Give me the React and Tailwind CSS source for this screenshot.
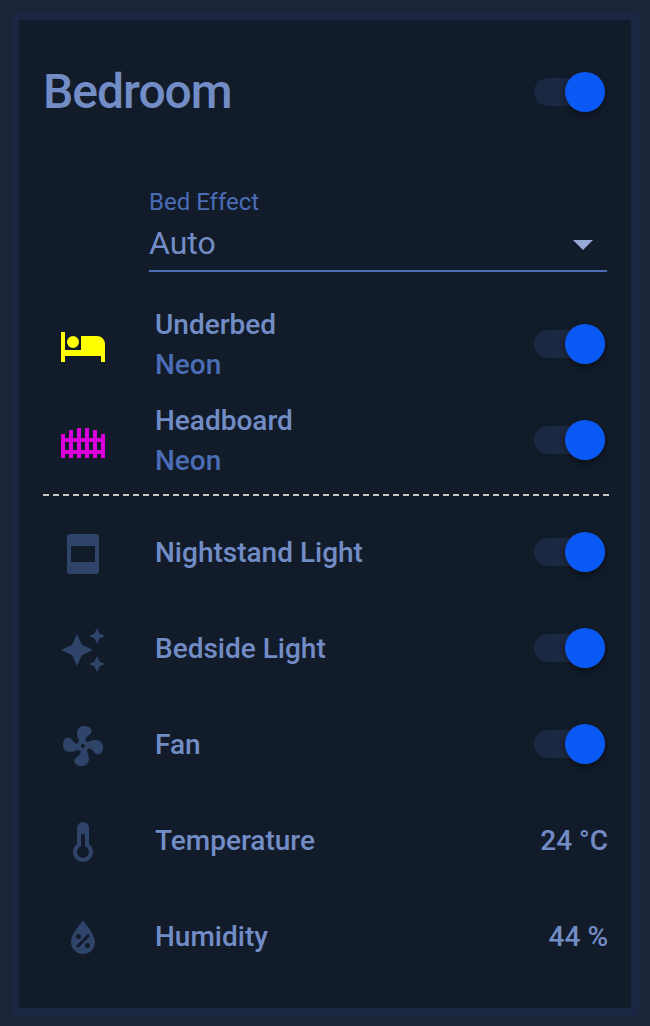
const ICONS = {
  bed: 'M19,7H11V14H3V5H1V20H3V17H21V20H23V11A4,4 0 0,0 19,7M7,13A3,3 0 0,0 10,10A3,3 0 0,0 7,7A3,3 0 0,0 4,10A3,3 0 0,0 7,13Z',
  fence:
    'M1,8H3V10H5V6H7V10H9V5H11V10H13V5H15V10H17V6H19V10H21V8H23V20H21V18H19V20H17V18H15V20H13V18H11V20H9V18H7V20H5V18H3V20H1ZM3,12V16H5V12ZM7,12V16H9V12ZM11,12V16H13V12ZM15,12V16H17V12ZM19,12V16H21V12Z',
  nightstand:
    'M5.5,2H18.5A1.5,1.5 0 0,1 20,3.5V20.5A1.5,1.5 0 0,1 18.5,22H5.5A1.5,1.5 0 0,1 4,20.5V3.5A1.5,1.5 0 0,1 5.5,2ZM6,8V16H18V8Z',
  sparkles:
    'M19,1L17.74,3.75L15,5L17.74,6.26L19,9L20.25,6.26L23,5L20.25,3.75M9,4L6.5,9.5L1,12L6.5,14.5L9,20L11.5,14.5L17,12L11.5,9.5M19,15L17.74,17.74L15,19L17.74,20.25L19,23L20.25,20.25L23,19L20.25,17.74',
  fan: 'M12,11A1,1 0 0,0 11,12A1,1 0 0,0 12,13A1,1 0 0,0 13,12A1,1 0 0,0 12,11M12.5,2C17,2 17.11,5.57 14.75,6.75C13.76,7.24 13.32,8.29 13.13,9.22C13.61,9.42 14.03,9.73 14.35,10.13C18.05,8.13 22.03,8.92 22.03,12.5C22.03,17 18.46,17.1 17.28,14.73C16.78,13.74 15.72,13.3 14.79,13.11C14.59,13.59 14.28,14 13.88,14.34C15.87,18.03 15.08,22 11.5,22C7,22 6.91,18.42 9.27,17.24C10.25,16.75 10.69,15.71 10.89,14.79C10.4,14.59 9.97,14.27 9.65,13.87C5.96,15.85 2,15.07 2,11.5C2,7 5.56,6.89 6.74,9.26C7.24,10.25 8.29,10.68 9.22,10.87C9.41,10.39 9.73,9.97 10.14,9.65C8.15,5.96 8.94,2 12.5,2Z',
  thermometer:
    'M17,17A5,5 0 0,1 12,22A5,5 0 0,1 7,17C7,15.36 7.79,13.91 9,13V5A3,3 0 0,1 12,2A3,3 0 0,1 15,5V13C16.21,13.91 17,15.36 17,17M11,8V14.17C9.83,14.58 9,15.69 9,17A3,3 0 0,0 12,20A3,3 0 0,0 15,17C15,15.69 14.17,14.58 13,14.17V8H11Z',
  humidity:
    'M12,3.25C12,3.25 6,10 6,14C6,17.32 8.69,20 12,20A6,6 0 0,0 18,14C18,10 12,3.25 12,3.25M14.47,9.97L15.53,11.03L9.53,17.03L8.47,15.97M9.75,10A1.25,1.25 0 0,1 11,11.25A1.25,1.25 0 0,1 9.75,12.5A1.25,1.25 0 0,1 8.5,11.25A1.25,1.25 0 0,1 9.75,10M14.25,14.5A1.25,1.25 0 0,1 15.5,15.75A1.25,1.25 0 0,1 14.25,17A1.25,1.25 0 0,1 13,15.75A1.25,1.25 0 0,1 14.25,14.5Z',
};

function Icon({ name, color = 'text-[#2f4469]' }) {
  return (
    <svg viewBox="0 0 24 24" className={`mt-1 size-12 shrink-0 ${color}`}>
      <path d={ICONS[name]} fill="currentColor" fillRule="evenodd" />
    </svg>
  );
}

function Toggle() {
  return (
    <button
      type="button"
      role="switch"
      aria-checked="true"
      className="mr-0.5 flex h-10 w-[71px] shrink-0 items-center"
    >
      <span className="h-7 w-16 rounded-full bg-[#1b2841]" />
      <span className="-ml-[33px] size-10 shrink-0 rounded-full bg-[#0b59f4] shadow-[0_3px_6px_rgba(0,0,0,0.4)]" />
    </button>
  );
}

function Row({ icon, color, name, secondary, value }) {
  return (
    <div className="flex h-20 items-center pl-4">
      <Icon name={icon} color={color} />
      <div className="ml-12 flex-1 pt-0.5 text-[28px] leading-10 font-medium">
        <div>{name}</div>
        {secondary && <div className="text-[#4a6db5]">{secondary}</div>}
      </div>
      {value ? (
        <div className="-mr-px pt-0.5 text-[28px] leading-10 font-medium">{value}</div>
      ) : (
        <Toggle />
      )}
    </div>
  );
}

export default function App() {
  return (
    <div className="h-[1026px] w-[650px] bg-[#1a2538] pt-3 pl-[11px] font-[Roboto,sans-serif] text-[#728dc6]">
      <main className="flex h-[1004px] w-[628px] flex-col rounded-md bg-[#1b2742] p-2">
        <div className="flex-1 bg-[#121b2a] pr-6 pl-6">
          <header className="flex h-36 items-center justify-between">
            <h1 className="text-[48px] leading-[56px] font-medium tracking-[-0.021em]">Bedroom</h1>
            <Toggle />
          </header>

          <div className="mt-1 ml-[106px] h-[104px] border-b-2 border-[#4a6db5] pt-5">
            <div className="text-2xl leading-7 text-[#4a6db5]">Bed Effect</div>
            <div className="mt-[3px] flex items-center justify-between pr-3.5 text-[32px] leading-[48px]">
              <span>Auto</span>
              <svg viewBox="0 0 20 10" className="mt-1 h-2.5 w-5 text-[#98a9d8]">
                <path d="M0 0H20L10 10Z" fill="currentColor" />
              </svg>
            </div>
          </div>

          <section className="mt-8 flex flex-col gap-4">
            <Row icon="bed" color="text-[#ffff00]" name="Underbed" secondary="Neon" />
            <Row icon="fence" color="text-[#d900d9]" name="Headboard" secondary="Neon" />
          </section>

          <div className="mt-3.5 -mr-0.5 h-0.5 bg-[repeating-linear-gradient(90deg,#c8c8c4_0px,#c8c8c4_6px,transparent_6px,transparent_10px)]" />

          <section className="mt-4 flex flex-col gap-4">
            <Row icon="nightstand" name="Nightstand Light" />
            <Row icon="sparkles" name="Bedside Light" />
            <Row icon="fan" name="Fan" />
            <Row icon="thermometer" name="Temperature" value="24 °C" />
            <Row icon="humidity" name="Humidity" value="44 %" />
          </section>
        </div>
      </main>
    </div>
  );
}
